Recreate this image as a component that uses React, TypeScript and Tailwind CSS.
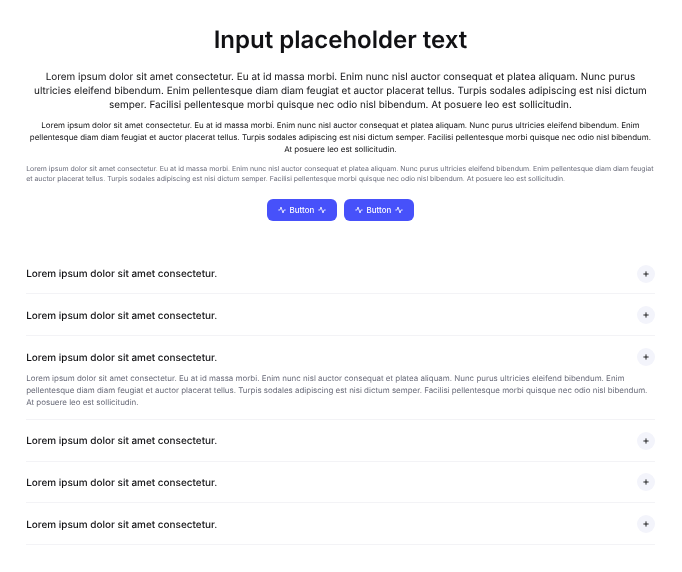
import React from 'react';

function Pulse() {
  return (
    <svg className="size-2" viewBox="0 0 24 24" fill="none" stroke="currentColor" strokeWidth="2.4" strokeLinecap="round" strokeLinejoin="round">
      <path d="M22 12h-4l-3 9L9 3l-3 9H2" />
    </svg>
  );
}

function Button() {
  return (
    <button className="flex h-[22px] w-[69.2px] items-center justify-center gap-1 rounded-md bg-[#4751fa] text-[7.94px] font-medium text-white">
      <Pulse />
      <span className="pt-px">Button</span>
      <Pulse />
    </button>
  );
}

function Item({ body }: { body?: string[] }) {
  return (
    <div className={`border-b border-[#f3f3f6] ${body ? 'h-[83.6px]' : 'h-[41.75px]'}`}>
      <div className="flex h-[41.75px] items-center justify-between">
        <h3 className="pt-[2px] text-[9.96px] font-medium text-[#111114]">Lorem ipsum dolor sit amet consectetur.</h3>
        <span className="flex size-[18px] items-center justify-center rounded-full bg-[#f3f4fb] text-[#111]">
          <svg className="size-[6px]" viewBox="0 0 6 6" stroke="currentColor" strokeWidth="0.9">
            <path d="M3 0.4v5.2M0.4 3h5.2" />
          </svg>
        </span>
      </div>
      {body && (
        <div className="-mt-[5.6px] text-[7.94px] leading-[12px] text-[#686a78]">
          {body.map((line) => <p key={line} className="whitespace-nowrap">{line}</p>)}
        </div>
      )}
    </div>
  );
}

const answer = [
  'Lorem ipsum dolor sit amet consectetur. Eu at id massa morbi. Enim nunc nisl auctor consequat et platea aliquam. Nunc purus ultricies eleifend bibendum. Enim',
  'pellentesque diam diam feugiat et auctor placerat tellus. Turpis sodales adipiscing est nisi dictum semper. Facilisi pellentesque morbi quisque nec odio nisl bibendum.',
  'At posuere leo est sollicitudin.',
];

export default function App() {
  return (
    <main className="h-[572px] w-[682px] pt-[24px] pl-[26.2px] font-['Inter',sans-serif] text-[#111114] will-change-transform [text-rendering:geometricPrecision]">
      <div className="w-[628.5px]">
        <h1 className="text-center text-[24px] leading-8 font-semibold">Input placeholder text</h1>
        <div className="mt-[14px] text-center text-[9.93px] leading-[14px] whitespace-nowrap">
          <p>Lorem ipsum dolor sit amet consectetur. Eu at id massa morbi. Enim nunc nisl auctor consequat et platea aliquam. Nunc purus</p>
          <p>ultricies eleifend bibendum. Enim pellentesque diam diam feugiat et auctor placerat tellus. Turpis sodales adipiscing est nisi dictum</p>
          <p>semper. Facilisi pellentesque morbi quisque nec odio nisl bibendum. At posuere leo est sollicitudin.</p>
        </div>
        <div className="mt-[7px] text-center text-[7.94px] leading-[12px] whitespace-nowrap">
          <p>Lorem ipsum dolor sit amet consectetur. Eu at id massa morbi. Enim nunc nisl auctor consequat et platea aliquam. Nunc purus ultricies eleifend bibendum. Enim</p>
          <p>pellentesque diam diam feugiat et auctor placerat tellus. Turpis sodales adipiscing est nisi dictum semper. Facilisi pellentesque morbi quisque nec odio nisl bibendum.</p>
          <p>At posuere leo est sollicitudin.</p>
        </div>
        <div className="mt-[9px] text-[6.95px] leading-[10px] whitespace-nowrap text-[#686a78]">
          <p>Lorem ipsum dolor sit amet consectetur. Eu at id massa morbi. Enim nunc nisl auctor consequat et platea aliquam. Nunc purus ultricies eleifend bibendum. Enim pellentesque diam diam feugiat</p>
          <p>et auctor placerat tellus. Turpis sodales adipiscing est nisi dictum semper. Facilisi pellentesque morbi quisque nec odio nisl bibendum. At posuere leo est sollicitudin.</p>
        </div>
        <div className="mt-[15px] flex justify-center gap-[7.8px]">
          <Button />
          <Button />
        </div>
        <section className="mt-[31.7px]">
          <Item />
          <Item />
          <Item body={answer} />
          <Item />
          <Item />
          <Item />
        </section>
      </div>
    </main>
  );
}
